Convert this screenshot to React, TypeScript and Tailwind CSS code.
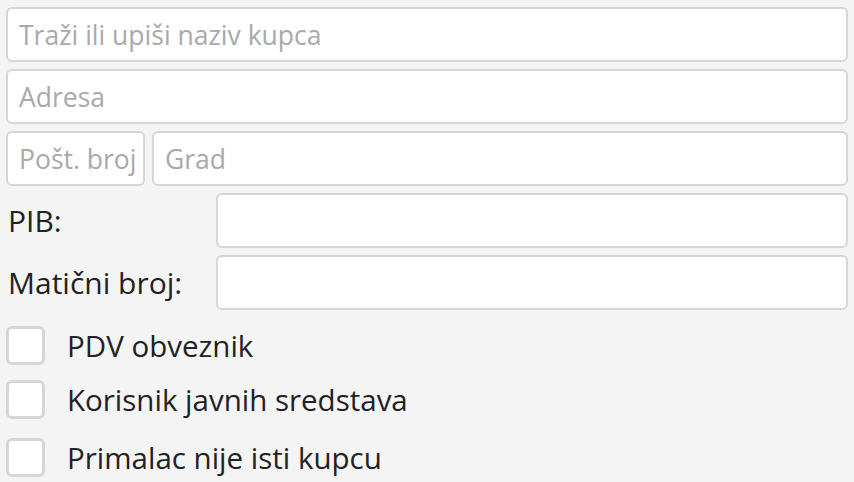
import { useState } from "react";

const font = { fontFamily: '"Open Sans", "Noto Sans", sans-serif' };

function TextField({
  placeholder,
  className = "",
  pad = "px-[11px]",
}: {
  placeholder?: string;
  className?: string;
  pad?: string;
}) {
  return (
    <input
      type="text"
      placeholder={placeholder}
      className={`h-[55px] min-w-0 rounded-[6px] border-2 border-[#d3d6da] bg-white text-[26.5px] text-[#222] outline-none placeholder:text-[#a9a9a9] ${pad} ${className}`}
      style={font}
    />
  );
}

function Check({ label, className = "" }: { label: string; className?: string }) {
  const [on, setOn] = useState(false);
  return (
    <label className={`flex h-[39px] cursor-pointer items-center gap-[22px] ${className}`}>
      <span
        onClick={() => setOn(!on)}
        className="flex h-[39px] w-[39px] shrink-0 items-center justify-center rounded-[6px] border-[3px] border-[#d3d6da] bg-white"
      >
        {on && <span className="text-[22px] text-[#222]">✓</span>}
      </span>
      <span className="text-[29.5px] leading-[39px] text-[#222]">{label}</span>
    </label>
  );
}

export default function App() {
  return (
    <div className="h-[482px] w-[854px] overflow-hidden bg-[#f4f4f4] px-[6px] pt-[7px]" style={font}>
      <div className="flex flex-col gap-[7px]">
        <TextField placeholder="Traži ili upiši naziv kupca" />
        <TextField placeholder="Adresa" />
        <div className="flex gap-[7px]">
          <TextField placeholder="Pošt. broj" className="w-[139px]" pad="pl-[11px] pr-[2px]" />
          <TextField placeholder="Grad" className="flex-1" />
        </div>
        <div className="flex items-center">
          <span className="w-[210px] pl-[2px] text-[30px] leading-[40px] text-[#222]">PIB:</span>
          <TextField className="flex-1" />
        </div>
        <div className="flex items-center">
          <span className="w-[210px] pl-[2px] text-[30px] leading-[40px] text-[#222]">Matični broj:</span>
          <TextField className="flex-1" />
        </div>
      </div>
      <div className="mt-[16px] flex flex-col">
        <Check label="PDV obveznik" />
        <Check label="Korisnik javnih sredstava" className="mt-[15px]" />
        <Check label="Primalac nije isti kupcu" className="mt-[19px]" />
      </div>
    </div>
  );
}
